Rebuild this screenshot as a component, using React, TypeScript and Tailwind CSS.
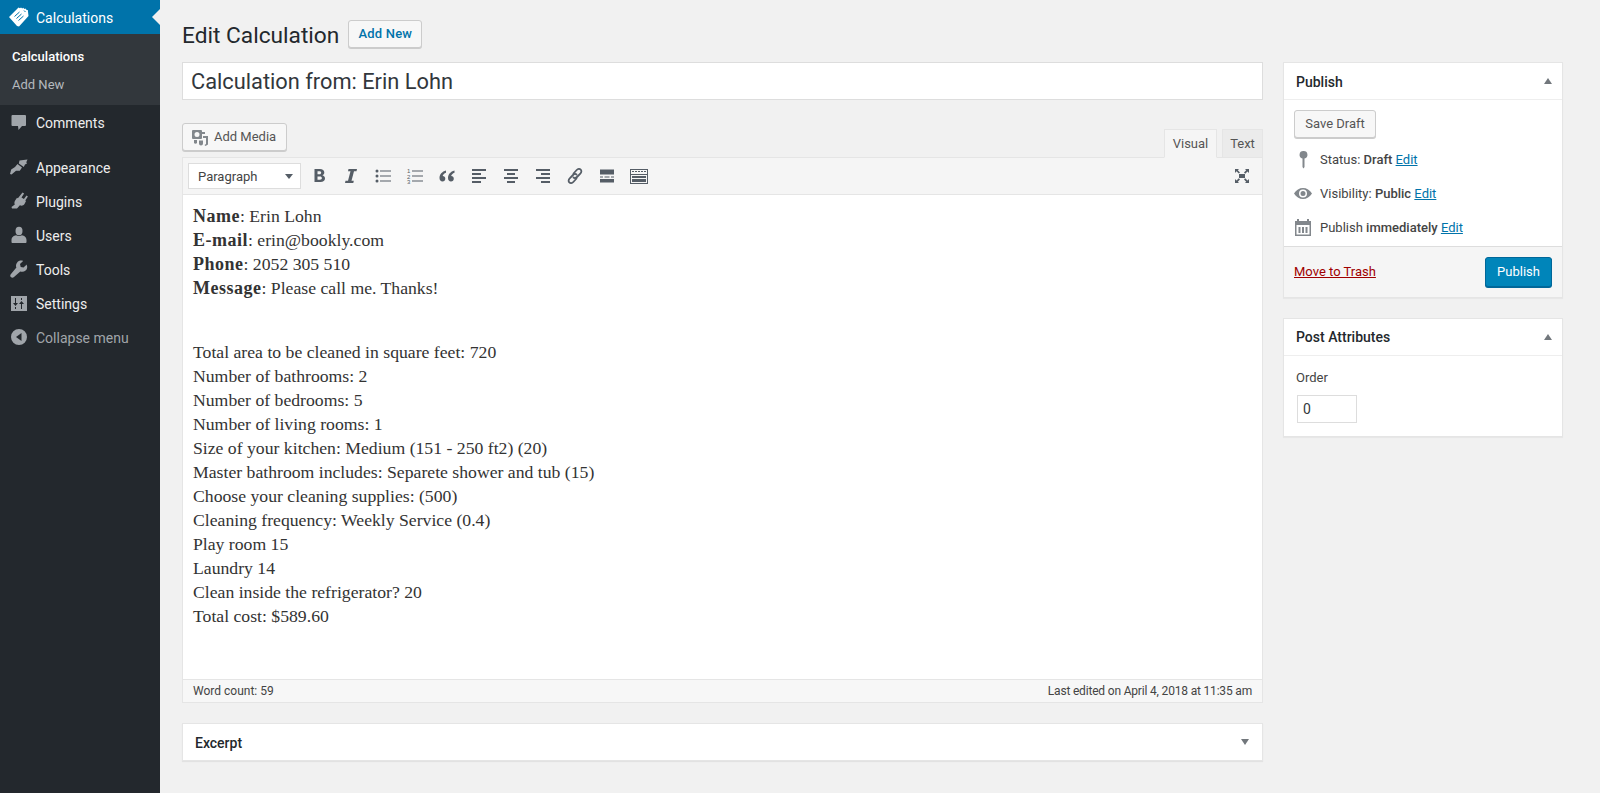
import React from "react";

const sans = "font-['Roboto','Noto_Sans',sans-serif]";

function Svg({ children, size = 20, className = "" }: { children: React.ReactNode; size?: number; className?: string }) {
  return (
    <svg width={size} height={size} viewBox="0 0 20 20" fill="currentColor" className={"shrink-0 " + className}>
      {children}
    </svg>
  );
}

const icons: Record<string, React.ReactNode> = {
  tag: (
    <>
      <path d="M0 10 L9.500 0.500 L11 1.200 L12 0.500 L13.200 1.500 L14.200 .8 L15.500 2 L16.500 1.500 L17.700 3 L18.800 3 L19.500 9 L10 19.500 L8 19 Z" />
      <path d="M5.500 9.500l5-4.500M7.500 11.500l5-4.500M9.500 13.500l5-4.500M15 3.500l1.500 1.500" stroke="#0073aa" strokeWidth="1" fill="none" />
    </>
  ),
  comments: <path d="M3.500 3h12.500a1 1 0 0 1 1 1v9a1 1 0 0 1-1 1h-3l-3.500 4-.5-4H3.500a1 1 0 0 1-1-1V4a1 1 0 0 1 1-1z" />,
  appearance: (
    <>
      <path d="M10.500 3.500l8 -1-1.200 2.700.7 1.300-2 1-1.200 2.500-5-3.500z" />
      <path d="M8.500 7l4.500 3.500-2.200 3.300H7L2.500 17.500 1 17l1.200-4.500 3.800-2.500z" />
    </>
  ),
  plugins: (
    <path d="M13.500 1.500l1.600 1-2.600 4 2.400 1.500 2.600-3.600 1.400 1-2.600 4 .7.600-1.500 3c-1 1.600-3 2.100-4.600 1.300L8 17.500H3l-.5-1.500 3.300-2.500c-.6-1.200-.5-2.600.2-3.800l2-3 .9.500z" />
  ),
  users: (
    <>
      <ellipse cx="10" cy="6" rx="3.500" ry="4.200" />
      <path d="M2.500 15c0-2.800 2.500-4.500 4.500-4.700 1.800 1 4.200 1 6 0 2 .2 4.500 1.900 4.500 4.700v2c0 .6-.5 1-1 1h-13c-.5 0-1-.4-1-1z" />
    </>
  ),
  tools: (
    <path d="M17.700 5.500l-3.200 3.100-2.800-.7-.7-2.800 3.100-3.200c-2.200-.7-4.600-.1-5.900 1.500-1.300 1.500-1.500 3.500-.8 5.200L2 14.900c-1 1-1 2.300-.1 3.100.9.900 2.200.900 3.100-.1l6.300-5.400c1.800.7 3.800.4 5.300-.9 1.600-1.400 2.100-3.600 1.100-5.600z" />
  ),
  settings: (
    <path
      fillRule="evenodd"
      d="M2 3h16v15H2zM6 5v5H4l2.500 3L9 10H7V5zM6 14v2h1v-2zM13 16v-5h2l-2.500-3L10 11h2v5zM12 5v2h1V5z"
    />
  ),
  collapse: <path fillRule="evenodd" d="M10 2a8 8 0 1 1 0 16 8 8 0 0 1 0-16zM12.500 6L7 10l5.500 4z" />,
};

function MenuItem({ icon, label, dim }: { icon: string; label: string; dim?: boolean }) {
  return (
    <div className={"flex h-[34px] items-center pl-[9px] text-[14px] " + (dim ? "text-[#a0a5aa]" : "text-[#eeeeee]")}>
      <span className="w-[27px] text-[#a0a5aa]">
        <Svg>{icons[icon]}</Svg>
      </span>
      <span className="pt-[2px]">{label}</span>
    </div>
  );
}

function Sidebar() {
  return (
    <aside className="w-[160px] shrink-0 bg-[#23282d]">
      <div className="relative flex h-[34px] items-center bg-[#0073aa] pl-[9px] text-[14px] text-white">
        <span className="w-[27px]">
          <Svg>{icons.tag}</Svg>
        </span>
        <span className="pt-[2px]">Calculations</span>
        <span className="absolute right-0 top-[9px] h-0 w-0 border-y-[8px] border-r-[8px] border-y-transparent border-r-[#f1f1f1]" />
      </div>
      <div className="flex h-[71px] flex-col bg-[#32373c] pl-[12px] pt-[9px] text-[13px] leading-[28px]">
        <span className="font-medium text-white">Calculations</span>
        <span className="text-[#b4b9be]">Add New</span>
      </div>
      <MenuItem icon="comments" label="Comments" />
      <div className="mt-[11px]">
        <MenuItem icon="appearance" label="Appearance" />
        <MenuItem icon="plugins" label="Plugins" />
        <MenuItem icon="users" label="Users" />
        <MenuItem icon="tools" label="Tools" />
        <MenuItem icon="settings" label="Settings" />
        <MenuItem icon="collapse" label="Collapse menu" dim />
      </div>
    </aside>
  );
}

const tb: React.ReactNode[] = [
  <path key="b" d="M5.500 3h5.500c2.500 0 4.300 1.300 4.300 3.500 0 1.300-.7 2.300-1.900 2.800 1.600.4 2.600 1.600 2.600 3.200 0 2.300-1.800 3.500-4.500 3.500h-6zM8.500 5.300v3h2c1 0 1.700-.6 1.700-1.500s-.7-1.500-1.700-1.500zM8.500 10.500v3.200h2.500c1.100 0 1.900-.6 1.900-1.600s-.8-1.600-1.900-1.600z" />,
  <path key="i" d="M7.500 3h8.500l-.5 2.200H13l-2.500 9.600h2.300l-.5 2.200H4l.5-2.200h2.500l2.500-9.600H7z" />,
  <g key="ul">
    <circle cx="4" cy="5" r="1.500" />
    <circle cx="4" cy="10" r="1.500" />
    <circle cx="4" cy="15" r="1.500" />
    <path d="M7 4.500h11v1H7zM7 9.500h11v1H7zM7 14.500h11v1H7z" />
  </g>,
  <g key="ol">
    <text x="2" y="7" fontSize="6" fontFamily="'Liberation Sans'">1</text>
    <text x="2" y="12.500" fontSize="6" fontFamily="'Liberation Sans'">2</text>
    <text x="2" y="18" fontSize="6" fontFamily="'Liberation Sans'">3</text>
    <path d="M7 4.500h11v1H7zM7 9.500h11v1H7zM7 14.500h11v1H7z" />
  </g>,
  <path key="q" d="M9 4.500C5 5.500 2.500 8.500 2.500 12c0 2.200 1.300 3.500 3 3.500s2.800-1.200 2.800-2.800-1.100-2.700-2.600-2.700c.2-1.300 1.500-2.700 3.300-3.300zM17.500 4.500c-4 1-6.500 4-6.500 7.500 0 2.200 1.300 3.500 3 3.500s2.800-1.200 2.800-2.800-1.100-2.700-2.600-2.700c.2-1.300 1.500-2.700 3.300-3.300z" />,
  <path key="al" d="M3 3h14v2H3zM3 7h9v2H3zM3 11h14v2H3zM3 15h9v2H3z" />,
  <path key="ac" d="M3 3h14v2H3zM6 7h8v2H6zM3 11h14v2H3zM6 15h8v2H6z" />,
  <path key="ar" d="M3 3h14v2H3zM8 7h9v2H8zM3 11h14v2H3zM8 15h9v2H8z" />,
  <g key="link" fill="none" stroke="currentColor" strokeWidth="1.800" strokeLinecap="round">
    <path d="M8.500 7.500l3.200-3.500c1.200-1.300 3-1.400 4-.4s.9 2.800-.4 4l-3.300 3.400c-1.200 1.200-2.700 1.300-3.500.5" />
    <path d="M11.500 12.500l-3.200 3.500c-1.200 1.300-3 1.400-4 .4s-.9-2.800.4-4l3.300-3.400c1.200-1.200 2.700-1.300 3.500-.5" />
  </g>,
  <path key="more" d="M3 3.500h14v5H3zM3 13h14v3.500H3zM3 10.500h3v1H3zM7.500 10.500h5v1h-5zM14 10.500h3v1h-3z" />,
  <path
    key="kb"
    fillRule="evenodd"
    d="M1 3h18v15H1zM2 4v4h16V4zM2 9v8h16V9zM3 5h2v1H3zM6 5h2v1H6zM9 5h2v1H9zM12 5h2v1h-2zM15 5h2v1h-2zM3 10h14v2H3zM3 13h14v3H3z"
  />,
];

function Toolbar() {
  return (
    <div className="flex h-[37px] items-center border-b border-[#e5e5e5] bg-[#f5f5f5] pl-[5px] pr-[10px] text-[#555d66]">
      <div className="flex h-[26px] w-[113px] items-center justify-between border border-[#dddddd] bg-white pl-[9px] pr-[7px] text-[13px] text-[#444]">
        <span className="pt-[2px]">Paragraph</span>
        <span className="h-0 w-0 border-x-[4px] border-t-[5px] border-x-transparent border-t-[#555d66]" />
      </div>
      <div className="ml-[8px] flex items-center gap-[12px]">
        {tb.map((t, i) => (
          <Svg key={i}>{t}</Svg>
        ))}
      </div>
      <div className="ml-auto">
        <Svg>
          <path d="M7 8h6v4H7zM3 3l4 0-1.200 1.200L8 6.500 6.800 7.500 4.500 5.300 3 7zM17 3v4l-1.500-1.400-2.300 2.200L12 6.500l2.200-2.300L13 3zM3 17v-4l1.500 1.400 2.300-2.200 1.200 1.300-2.200 2.300L7 17zM17 17h-4l1.200-1.200L12 13.500l1.200-1.200 2.300 2.200L17 13z" />
        </Svg>
      </div>
    </div>
  );
}

const bold: [string, string][] = [
  ["Name", ": Erin Lohn"],
  ["E-mail", ": erin@bookly.com"],
  ["Phone", ": 2052 305 510"],
  ["Message", ": Please call me. Thanks!"],
];

const lines = [
  "Total area to be cleaned in square feet: 720",
  "Number of bathrooms: 2",
  "Number of bedrooms: 5",
  "Number of living rooms: 1",
  "Size of your kitchen: Medium (151 - 250 ft2) (20)",
  "Master bathroom includes: Separete shower and tub (15)",
  "Choose your cleaning supplies: (500)",
  "Cleaning frequency: Weekly Service (0.4)",
  "Play room 15",
  "Laundry 14",
  "Clean inside the refrigerator? 20",
  "Total cost: $589.60",
];

function Caret({ up }: { up?: boolean }) {
  return (
    <span
      className={
        "h-0 w-0 border-x-[4px] border-x-transparent " +
        (up ? "border-b-[6px] border-b-[#72777c]" : "border-t-[6px] border-t-[#72777c]")
      }
    />
  );
}

function Editor() {
  return (
    <div className="mt-[6px] border border-[#e5e5e5] bg-white">
      <Toolbar />
      <div className="h-[484px] pl-[10px] pr-[9px] pt-[9px] font-['Liberation_Serif',serif] text-[17.7px] leading-[24px] text-[#333]">
        <div className="mb-[40px]">
          {bold.map(([k, v]) => (
            <div key={k}>
              <b className="text-[18px] tracking-[0.5px]">{k}</b>
              {v}
            </div>
          ))}
        </div>
        {lines.map((l) => (
          <div key={l}>{l}</div>
        ))}
      </div>
      <div className="flex h-[23px] items-center justify-between border-t border-[#e5e5e5] bg-[#f7f7f7] px-[10px] text-[12px] text-[#444]">
        <span>Word count: 59</span>
        <span className="tracking-[-0.18px]">Last edited on April 4, 2018 at 11:35 am</span>
      </div>
    </div>
  );
}

function Button({ children, className = "" }: { children: React.ReactNode; className?: string }) {
  return (
    <div
      className={
        "flex h-[28px] items-center rounded-[3px] border border-[#cccccc] bg-[#f7f7f7] text-[13px] shadow-[0_1px_0_#cccccc] " +
        className
      }
    >
      {children}
    </div>
  );
}

function Box({
  title,
  children,
  className = "",
  titleClass = "pt-[2px]",
}: {
  title: string;
  children: React.ReactNode;
  className?: string;
  titleClass?: string;
}) {
  return (
    <section className={"border border-[#e5e5e5] bg-white shadow-[0_1px_1px_rgba(0,0,0,0.04)] " + className}>
      <div className="flex h-[37px] items-center justify-between border-b border-[#eeeeee] pl-[12px] pr-[10px] text-[14px] font-medium text-[#23282d]">
        <span className={titleClass}>{title}</span>
        <Caret up />
      </div>
      {children}
    </section>
  );
}

function Row({ icon, children }: { icon: React.ReactNode; children: React.ReactNode }) {
  return (
    <div className="flex h-[34px] items-center text-[13px] text-[#444]">
      <span className="w-[25px] text-[#82878c]">
        <Svg size={20} className="-ml-[1px]">
          {icon}
        </Svg>
      </span>
      <span>{children}</span>
    </div>
  );
}

const Edit = () => <span className="text-[#0073aa] underline">Edit</span>;

export default function App() {
  return (
    <div className={"flex h-[793px] overflow-hidden bg-[#f1f1f1] " + sans}>
      <Sidebar />
      <main className="flex min-w-0 flex-1 pl-[22px] pr-[37px]">
        <div className="w-[1081px] shrink-0">
          <div className="flex h-[62px] items-start pt-[20px]">
            <h1 className="pt-px text-[22.7px] leading-[29px] text-[#23282d]">Edit Calculation</h1>
            <Button className="ml-[9px] w-[74px] justify-center font-medium tracking-[0.2px] text-[#0073aa]">Add New</Button>
          </div>
          <div className="flex h-[38px] items-center border border-[#dddddd] bg-white pl-[8px] pt-[3px] text-[21.8px] text-[#32373c]">
            Calculation from: Erin Lohn
          </div>
          <div className="mt-[23px] flex items-end justify-between">
            <Button className="w-[105px] pl-[7px] text-[#555555]">
              <span className="mr-[4px] text-[#82878c]">
                <Svg size={20}>
                  <path
                    fillRule="evenodd"
                    d="M3 3h8a1 1 0 0 1 1 1v1h3v2h-3v4a1 1 0 0 1-1 1H3a1 1 0 0 1-1-1V4a1 1 0 0 1 1-1zM7 5a2.500 2.500 0 1 0 0 5 2.500 2.500 0 0 0 0-5zM13 9h5v8.500l-2.500 1.500-1-1 1.500-1V11h-3zM9 13.500h4v3a2 2 0 0 1-4 0zM4 13h3v3a1.800 1.800 0 0 1-3 0z"
                  />
                </Svg>
              </span>
              Add Media
            </Button>
            <div className="relative z-10 -mb-[7px] flex items-end text-[13px] text-[#555]">
              <div className="flex h-[29px] w-[53px] items-center justify-center border border-[#e5e5e5] border-b-[#f5f5f5] bg-[#f5f5f5]">
                Visual
              </div>
              <div className="ml-[5px] flex h-[29px] w-[41px] items-center justify-center border border-[#e5e5e5] bg-[#ebebeb]">
                Text
              </div>
            </div>
          </div>
          <Editor />
          <div className="mt-[20px] flex h-[38px] items-center justify-between border border-[#e5e5e5] bg-white pl-[12px] pr-[13px] text-[14px] font-medium text-[#23282d] shadow-[0_1px_1px_rgba(0,0,0,0.06)]">
            <span className="pt-[2px]">Excerpt</span>
            <Caret />
          </div>
        </div>
        <div className="ml-[20px] w-[280px] shrink-0 pt-[62px]">
          <Box title="Publish">
            <div className="px-[10px] pt-[10px]">
              <Button className="w-[82px] justify-center text-[#555555]">Save Draft</Button>
              <div className="ml-px mt-[5px] pb-px">
                <Row
                  icon={
                    <path d="M9.500 1a3.800 3.800 0 0 1 1 7.500V17l-1 1.500L8.500 17V8.500A3.800 3.800 0 0 1 9.500 1z" />
                  }
                >
                  Status: <span className="font-medium">Draft</span> <Edit />
                </Row>
                <Row
                  icon={
                    <path
                      fillRule="evenodd"
                      d="M0 9.500C2 6 5.500 4 9 4s7 2 9 5.500C16 13 12.500 15 9 15S2 13 0 9.500zM9 5.500a4 4 0 1 0 0 8 4 4 0 0 0 0-8zM9 7a2.500 2.500 0 1 1 0 5 2.500 2.500 0 0 1 0-5z"
                    />
                  }
                >
                  Visibility: <span className="font-medium">Public</span> <Edit />
                </Row>
                <Row
                  icon={
                    <path
                      fillRule="evenodd"
                      d="M1 3h2V1h2v2h8V1h2v2h2v15H1zM2.500 7v9.500h13V7zM4.500 9h2v6h-2zM8 9h2v6H8zM11.500 9h2v6h-2z"
                    />
                  }
                >
                  Publish <span className="font-medium">immediately</span> <Edit />
                </Row>
              </div>
            </div>
            <div className="flex h-[51px] items-center justify-between border-t border-[#dddddd] bg-[#f5f5f5] pl-[10px] pr-[10px] text-[13px]">
              <span className="text-[#a00000] underline">Move to Trash</span>
              <div className="flex h-[30px] w-[67px] items-center justify-center rounded-[3px] border border-[#006799] bg-[#0085ba] text-white shadow-[0_1px_0_#006799]">
                Publish
              </div>
            </div>
          </Box>
          <Box title="Post Attributes" className="mt-[20px]" titleClass="pt-0">
            <div className="h-[80px] px-[12px] pt-[12px] text-[13px] text-[#444]">
              <div className="leading-[20px]">Order</div>
              <div className="ml-px mt-[7px] flex h-[28px] w-[60px] items-center border border-[#dddddd] pl-[5px] text-[14px] text-[#32373c]">
                0
              </div>
            </div>
          </Box>
        </div>
      </main>
    </div>
  );
}
